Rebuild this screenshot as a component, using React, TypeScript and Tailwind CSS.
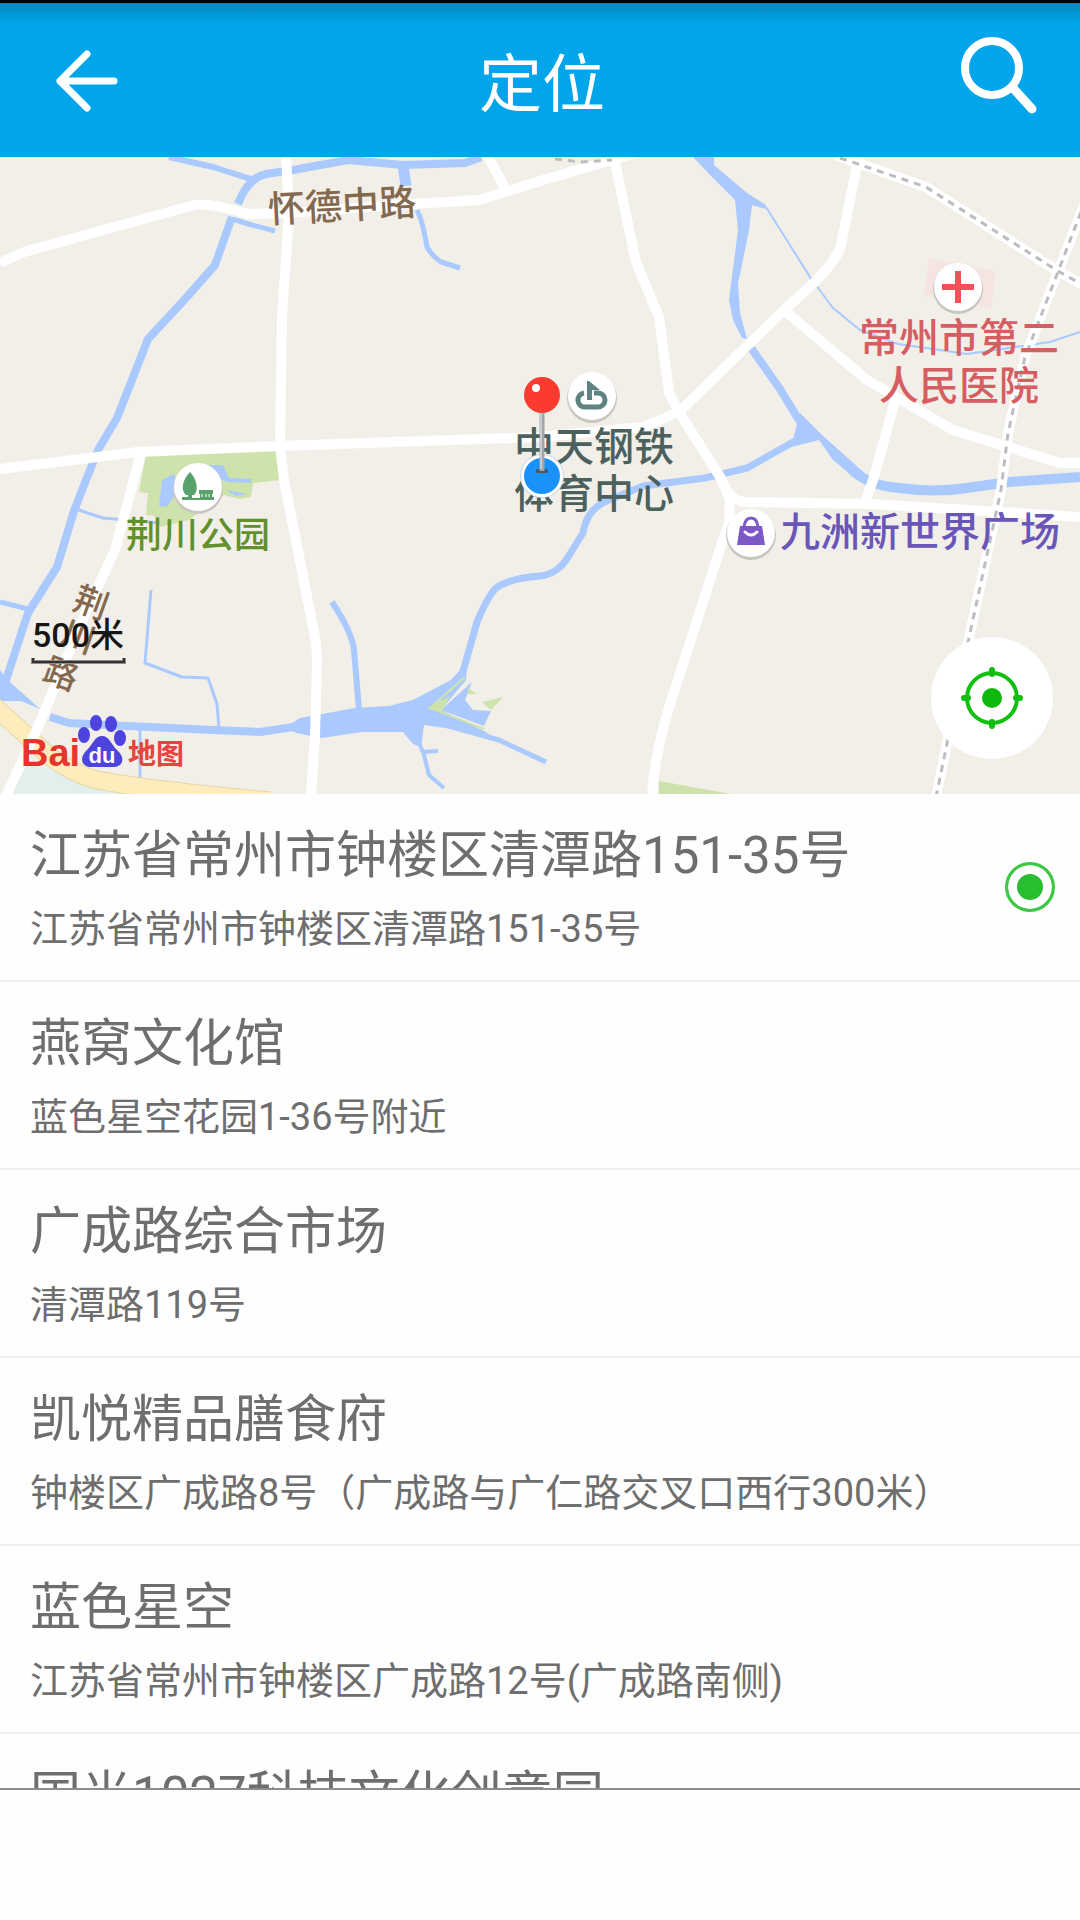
import React from "react";

const places = [
  { name: "江苏省常州市钟楼区清潭路151-35号", address: "江苏省常州市钟楼区清潭路151-35号" },
  { name: "燕窝文化馆", address: "蓝色星空花园1-36号附近" },
  { name: "广成路综合市场", address: "清潭路119号" },
  { name: "凯悦精品膳食府", address: "钟楼区广成路8号（广成路与广仁路交叉口西行300米）" },
  { name: "蓝色星空", address: "江苏省常州市钟楼区广成路12号(广成路南侧)" },
  { name: "国光1027科技文化创意园", address: "" },
];

function Header() {
  return (
    <header className="grid h-[157px] shrink-0 grid-cols-[1fr_auto_1fr] items-center border-t-[3px] border-black bg-linear-to-b from-[#0487bd] to-[#02a5ea] to-[20px] pr-9 pl-12">
      <button type="button" aria-label="返回" className="flex size-20 items-center">
        <svg viewBox="0 0 80 80" className="size-20" fill="none" stroke="white" strokeWidth="7" strokeLinecap="round" strokeLinejoin="round">
          <path d="M39 14 L12 41 L39 68 M12 41 H66" />
        </svg>
      </button>
      <h1 className="pt-2 pr-2 text-[63px] leading-none text-white">定位</h1>
      <button type="button" aria-label="搜索" className="flex size-[92px] items-center justify-center justify-self-end">
        <svg viewBox="0 0 92 92" className="size-[92px]" fill="none" stroke="white" strokeLinecap="round">
          <circle cx="40" cy="34" r="27" strokeWidth="8" />
          <path d="M61 54 L80 75" strokeWidth="9" />
        </svg>
      </button>
    </header>
  );
}

function Poi({ x, y, children }: { x: number; y: number; children: React.ReactNode }) {
  return (
    <g transform={`translate(${x} ${y})`}>
      <circle cy="2" r="25" fill="#c9c6c0" />
      <circle r="24" fill="white" />
      {children}
    </g>
  );
}

function MapDrawing() {
  return (
    <svg viewBox="0 157 1080 637" className="block h-auto w-full bg-[#f1efe8]" role="img" aria-label="地图">
      <path d="M146 455 L277 451 L281 480 L253 483 L251 497 L240 499 L224 495 L189 520 L160 527 L155 516 L146 515 L148 493 L139 492Z" fill="#cde3ab" />
      <path d="M659 781 L731 794 L659 794Z" fill="#cde3ab" />
      <path d="M929 258 L996 271 L991 308 L924 296Z" fill="#f5e5e2" />
      <path d="M20 765 L48 768 L93 787 L140 794 L7 794Z" fill="#e3efed" />

      <g fill="none" stroke="#a9c9ff" strokeLinejoin="round">
        <path d="M169 157 L213 167 L251 179" strokeWidth="6" />
        <path d="M238 204 Q248 178 266 174 L293 170 L348 160 L403 165 L465 163 L481 157" strokeWidth="8" />
        <path d="M403 165 L406 186" strokeWidth="11" />
        <path d="M417 210 Q423 222 427 247 Q432 256 441 262 L460 268" strokeWidth="5" />
        <path d="M232 217 L215 265 L186 298 L148 339 L117 418 L98 450 L86 480 L74 511 L57 567 L28 613 L5 683" strokeWidth="8" />
        <path d="M232 219 L252 225 L275 231" strokeWidth="5" />
        <path d="M76 509 L103 518 L160 523" strokeWidth="3" />
        <path d="M0 602 L28 609" strokeWidth="5" />
        <path d="M50 717 L69 723 L127 726 L213 730 L260 732 L300 726" strokeWidth="8" />
        <path d="M462 675 L477 622 Q488 596 496 588 Q510 578 540 576 Q558 574 568 557 L583 533 Q587 508 609 500 L643 486 L705 478 L747 468 L795 441" strokeWidth="7" />
        <path d="M427 720 L499 740 L546 762" strokeWidth="5" />
        <path d="M418 740 L424 755 L429 775 L444 788 M422 752 L438 751" strokeWidth="4" />
        <path d="M332 602 Q352 632 354 650 L359 710" strokeWidth="6" />
        <path d="M151 590 L145 663 L182 677 L208 678 L217 704 L219 729" strokeWidth="3" />
        <path d="M140 730 V778" strokeWidth="3" />
        <path d="M766 207 L810 277 L833 308 L860 330 L898 344 L967 354 L1050 342 L1080 332" strokeWidth="2" />
        <path d="M751 348 L780 389 L802 425" strokeWidth="8" />
        <path d="M850 468 Q868 486 900 488 Q935 493 967 488 L1008 482 L1080 477" strokeWidth="10" />
      </g>
      <g fill="#a9c9ff">
        <path d="M0 670 L10 682 L40 709 L21 701 L0 701Z" />
        <path d="M286 727 L300 718 L355 708 L389 706 L413 700 L451 680 L467 662 L466 680 L441 710 L490 734 L460 730 L424 725 L421 747 L413 744 L403 732 L362 732 L322 738 L296 733Z" />
        <path d="M472 682 L465 700 L473 710 L491 711 L484 726 L441 710Z" />
        <path d="M800 413 L822 435 L869 477 L850 474 L833 460 L819 440 L791 447Z" />
        <path d="M693 157 L714 157 L714 165 L747 193 L766 205 L766 209 L752 205 L749 230 L742 265 L738 283 L740 313 L747 339 L742 338 L733 320 L729 300 L738 230 L735 200 L712 177Z" />
        <path d="M174 474 L162 480 L159 506 L167 507 L178 490Z" />
        <path d="M207 465 L223 465 L229 478 L252 479 L250 483 L228 482 L216 478Z M226 490 L247 494 L236 496Z" />
      </g>
      <path d="M465 677 L430 708 L484 729" fill="none" stroke="#cde3ab" strokeWidth="2" />
      <path d="M427 708 L450 696 L441 713Z M468 688 L477 694 L468 694Z M482 702 L503 697 L491 710Z" fill="#cde3ab" />

      <path d="M-6 706 L48 755 Q70 772 93 779 Q140 789 270 801" fill="none" stroke="#e8d6a6" strokeWidth="19" />
      <path d="M-6 706 L48 755 Q70 772 93 779 Q140 789 270 801" fill="none" stroke="#ffecbd" strokeWidth="17" />

      <g fill="none" stroke="white" strokeWidth="10" strokeLinejoin="round">
        <path d="M0 263 L24 252 L194 205 Q206 202 248 214 L286 213 L413 204 L479 200 L540 181 L612 160 L640 152" />
        <path d="M487 155 L505 188" />
        <path d="M286 155 L289 213 L282 317 L280 446 L284 480 L313 627 Q317 645 317 660 L315 737 L311 795" />
        <path d="M0 469 L138 452 L279 446 L540 437 L643 427 L679 412 L784 310 L815 282 Q838 258 841 245 L859 155" />
        <path d="M614 158 L636 262 L659 317 L669 393 L679 412 L722 480 L730 500 L729 522 L709 583 L678 680 Q655 745 652 796" />
        <path d="M784 310 L867 380 L896 397 L953 430 L1060 463 L1080 463" />
        <path d="M896 397 L874 477 L865 503" />
        <path d="M721 480 Q730 500 744 502 L870 504 L1001 512 L1080 517" />
        <path d="M141 453 L115 550 L86 612 L38 727 L6 796" />
        <path d="M835 155 L926 187 L1056 270 L1085 286" />
        <path d="M1084 205 L1056 277 L1025 357 L1008 433 L1001 490 L967 647 L936 797" />
      </g>
      <g fill="none" stroke="#bdbdc0" strokeWidth="3" strokeDasharray="7 6">
        <path d="M840 158 L926 187 L1056 270 L1085 286" />
        <path d="M1081 212 L1056 277 L1025 357 L1008 433 L1001 490 L967 647 L936 797" />
        <path d="M555 159 L580 162 L612 160" />
      </g>

      <g fontWeight="500" fontSize="40" textAnchor="middle">
        <g fill="#d65d62">
          <text x="959" y="352">常州市第二</text>
          <text x="959" y="400">人民医院</text>
        </g>
        <g fill="#4c615e">
          <text x="594" y="461">中天钢铁</text>
          <text x="594" y="508">体育中心</text>
        </g>
        <text x="920" y="546" fill="#6a56b8">九洲新世界广场</text>
        <text x="198" y="548" fontSize="36" fill="#62902b">荆川公园</text>
        <g fontSize="37" fill="#84694f">
          <text transform="rotate(-3 342 206)" x="342" y="219">怀德中路</text>
          <g fontSize="34">
            <text transform="translate(91 603) rotate(20)" y="12">荆</text>
            <text transform="translate(78 637) rotate(20)" y="12">川</text>
            <text transform="translate(61 674) rotate(20)" y="12">路</text>
          </g>
        </g>
      </g>

      <Poi x={958} y={287}>
        <path d="M-16 0 H16 M0 -16 V16" stroke="#f5505a" strokeWidth="6" />
      </Poi>
      <Poi x={592} y={396}>
        <path d="M-8 -3 A7 7 0 0 0 -6 11 H6 A7 7 0 0 0 6 -3 H2" fill="none" stroke="#5f8282" strokeWidth="5" />
        <path d="M-5 4 V-15 H-3 L8 -6 H0 V4Z" fill="#5f8282" />
      </Poi>
      <Poi x={198} y={487}>
        <path d="M-8 -15 C-1 -8 1 4 -4 8 H-12 C-18 3 -15 -8 -8 -15Z M-10 6 H-6 V11 H2 V7 H1 V3 H15 V7 H14 V10 H16 V13 H-16 V10 H-10Z" fill="#59a26b" />
        <path d="M4 7 V10 M8 7 V10 M11 7 V10" stroke="white" strokeWidth="1" />
      </Poi>
      <Poi x={751} y={533}>
        <path d="M-11 -7 H11 L14 12 H-14Z" fill="#7d58c8" />
        <path d="M-7 -6 Q-6 -15 0 -15 Q6 -15 7 -6" fill="none" stroke="#7d58c8" strokeWidth="3" />
        <path d="M-6 -1 Q0 5 6 -1" fill="none" stroke="white" strokeWidth="3" strokeLinecap="round" />
      </Poi>

      <circle cx="542" cy="476" r="22" fill="#cfd6de" />
      <circle cx="542" cy="476" r="21" fill="white" />
      <circle cx="542" cy="476" r="18" fill="#1b92fb" />
      <path d="M538 471 H546" stroke="#4c5560" strokeWidth="4" strokeLinecap="round" />
      <path d="M542 410 V471" stroke="#a3a5aa" strokeWidth="5" />
      <path d="M541 410 V469" stroke="#c9cbd0" strokeWidth="2" />
      <circle cx="542" cy="395" r="18" fill="#fb3a30" />
      <circle cx="536" cy="388" r="4" fill="white" />

      <text x="32" y="647" fontSize="34" fontWeight="500" fill="#161616">500米</text>
      <path d="M33 658 V662 H124 V658" fill="none" stroke="#8f8d8a" strokeWidth="4" />
      <path d="M33 658 V662 H124 V658" fill="none" stroke="#333" strokeWidth="2" />

      <g fontWeight="700">
        <text x="21" y="766" fontSize="38" fill="#e8342e" className="font-['Liberation_Sans']">Bai</text>
        <g fill="#4d43dd">
          <path d="M102 736 C109 736 111 744 117 750 C126 758 123 767 113 767 H91 C81 767 79 757 87 750 C93 744 95 736 102 736Z" />
          <ellipse cx="84" cy="735" rx="6" ry="8" />
          <ellipse cx="96" cy="723" rx="6" ry="8" />
          <ellipse cx="111" cy="724" rx="6" ry="8" />
          <ellipse cx="120" cy="738" rx="6" ry="8" />
        </g>
        <text x="102" y="763" fontSize="22" textAnchor="middle" fill="white" className="font-['Liberation_Sans']">du</text>
        <text x="128" y="764" fontSize="28" fill="#e8433e">地图</text>
      </g>
    </svg>
  );
}

function MapPanel() {
  return (
    <section className="relative shrink-0">
      <MapDrawing />
      <button
        type="button"
        aria-label="定位到当前位置"
        className="absolute right-[27px] bottom-[35px] flex size-[122px] items-center justify-center rounded-full bg-white"
      >
        <svg viewBox="0 0 64 64" className="size-16" fill="none" stroke="#10bf10" strokeWidth="4">
          <circle cx="32" cy="32" r="25" />
          <circle cx="32" cy="32" r="10" fill="#0cb90c" stroke="none" />
          <path d="M32 4 V8 M32 56 V60 M4 32 H8 M56 32 H60" strokeWidth="6" strokeLinecap="round" />
        </svg>
      </button>
    </section>
  );
}

function PlaceList() {
  return (
    <ul className="min-h-0 flex-1 overflow-hidden">
      {places.map((place, i) => (
        <li key={place.name} className="border-b-2 border-[#f0f0f0]">
          <label className="flex items-center justify-between gap-6 pr-[25px] pl-[30px]">
            <span className="flex flex-col gap-[19px] pt-8 pb-[27px] text-[#6e6e6e]">
              <span className="text-[51px] leading-[60px]">{place.name}</span>
              {place.address && <span className="text-[38px] leading-[48px]">{place.address}</span>}
            </span>
            <input
              type="radio"
              name="place"
              defaultChecked={i === 0}
              className="size-[50px] shrink-0 appearance-none rounded-full border-[3px] border-transparent checked:border-[#3fc847] checked:bg-[#28be30] checked:shadow-[inset_0_0_0_9px_white]"
            />
          </label>
        </li>
      ))}
    </ul>
  );
}

export default function App() {
  return (
    <main className="flex h-screen flex-col overflow-hidden bg-[#fefefe] font-[Roboto,'Noto_Sans_CJK_SC',sans-serif]">
      <Header />
      <MapPanel />
      <PlaceList />
      <footer className="h-[132px] shrink-0 border-t-2 border-[#8c8c8c] bg-[#fefefe]" />
    </main>
  );
}
